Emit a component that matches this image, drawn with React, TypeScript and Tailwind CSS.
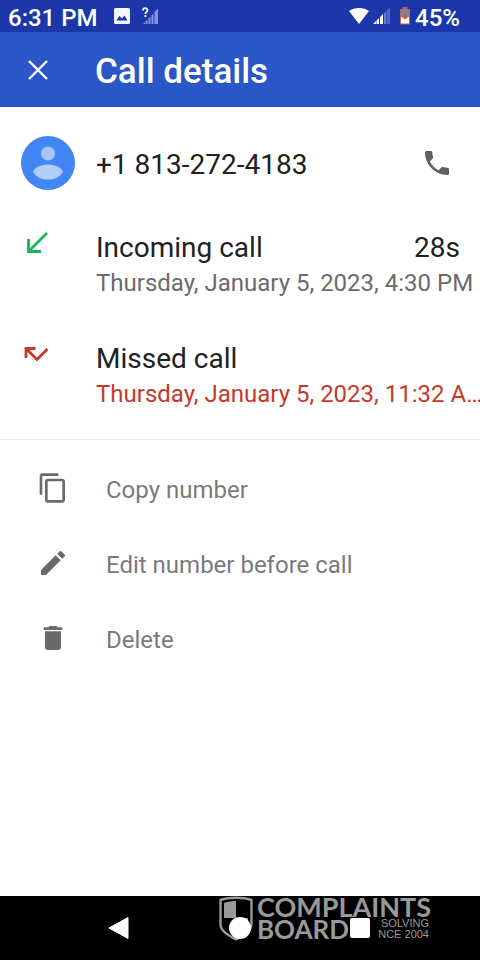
import { ReactNode } from "react"

const StatusBar = () => (
  <div className="flex h-8 items-center bg-[#1b37a9] pl-2 pr-5 text-2xl font-medium text-white">
    <span className="pt-1">6:31 PM</span>
    <svg className="ml-4 size-4" viewBox="0 0 16 16" aria-hidden="true">
      <path
        fill="#f4f7ff"
        fillRule="evenodd"
        d="M1.500 0h13A1.500 1.500 0 0 1 16 1.500v13a1.500 1.500 0 0 1-1.500 1.500h-13A1.500 1.500 0 0 1 0 14.500v-13A1.500 1.500 0 0 1 1.500 0zM2.500 12.500h11L10.500 7.500 8 10.500 5.300 8z"
      />
    </svg>
    <svg className="ml-3 h-[18px] w-4" viewBox="0 0 16 18" aria-hidden="true">
      <path
        fill="#8795d8"
        d="M1 17l2-2v2zM3.500 14.500l2-2V17h-2zM6.500 11.500l2-2V17h-2zM9.500 8.500l2-2V17h-2zM12.500 5L16 1.500V17h-3.500z"
      />
      <path
        fill="none"
        stroke="#f4f7ff"
        strokeWidth="1.800"
        d="M1 3.500C1 .5 5.500.5 5.500 3.200 5.500 5 3.400 4.800 3.400 7M3.400 8v2"
      />
    </svg>
    <svg className="ml-auto h-4 w-5" viewBox="0 0 20 16" aria-hidden="true">
      <path fill="#fff" d="M0 3C5.500-1 14.500-1 20 3L10 16z" />
    </svg>
    <svg className="ml-1 h-[18px] w-[18px]" viewBox="0 0 18 18" aria-hidden="true">
      <path fill="#fff" d="M0 17l3-3v3zM3.500 13.500l2.500-2.500v6H3.500zM7 10l3-3v10H7z" />
      <path fill="#6c7fd0" d="M11 6.500l2-2V17h-2z" />
      <path fill="#5363c6" d="M13.500 4L17 .5V17h-3.500z" />
    </svg>
    <svg className="ml-2 h-[18px] w-3" viewBox="0 0 12 18" aria-hidden="true">
      <path fill="#b0695f" d="M3.500 0h5v2H11v15.500H1V2h2.500z" />
      <path fill="#8d7da0" d="M2.500 3h7v7h-7z" />
      <path fill="#fff" d="M2 10h8v6.500H2z" />
      <path fill="#c9603f" d="M6 6.500l1 2.500 2.500 1L6 12.500 2.500 10 5 9z" />
    </svg>
    <span className="ml-1 pt-1">45%</span>
  </div>
)

const Header = () => (
  <header className="flex h-[75px] items-center border-b border-[#2450b5] bg-[#2a56c6] pl-[26px] pt-1.5 text-white">
    <button aria-label="Close">
      <svg className="size-6" viewBox="0 0 24 24" fill="none">
        <path stroke="currentColor" strokeWidth="2.400" d="M3 1l18 18M21 1L3 19" />
      </svg>
    </button>
    <h1 className="ml-[45px] text-[35px] font-medium leading-10">Call details</h1>
  </header>
)

const Contact = () => (
  <section className="flex items-center pl-[21px] pr-[27px]">
    <svg className="size-[54px] shrink-0" viewBox="0 0 54 54" aria-hidden="true">
      <circle cx="27" cy="27" r="27" fill="#4285f4" />
      <circle cx="27" cy="17.500" r="7" fill="#a6c5fa" />
      <path fill="#b3cdfb" d="M12 35.500C17 26 37 26 42 35.500 37 46.500 17 46.500 12 35.500z" />
    </svg>
    <h2 className="ml-[21px] flex-1 pt-1 text-[28px] leading-9">+1 813-272-4183</h2>
    <button aria-label="Call" className="text-[#616161]">
      <svg className="size-8" viewBox="0 0 24 24" fill="currentColor">
        <path d="M6.620 10.790c1.440 2.830 3.760 5.140 6.590 6.590l2.200-2.200c.27-.27.67-.36 1.020-.24 1.120.37 2.330.57 3.570.57.55 0 1 .45 1 1V20c0 .55-.45 1-1 1-9.390 0-17-7.610-17-17 0-.55.45-1 1-1h3.500c.55 0 1 .45 1 1 0 1.250.2 2.450.57 3.570.11.35.03.74-.25 1.020z" />
      </svg>
    </button>
  </section>
)

const CallEntry = ({
  icon,
  title,
  date,
  duration,
  missed,
}: {
  icon: ReactNode
  title: string
  date: string
  duration?: string
  missed?: boolean
}) => (
  <li className="flex pl-6">
    {icon}
    <div className="ml-12 min-w-0 flex-1">
      <div className="flex justify-between pr-5 text-[28px] leading-9">
        <span>{title}</span>
        {duration && <span>{duration}</span>}
      </div>
      <p
        className={`overflow-hidden whitespace-nowrap text-2xl leading-[34px] ${missed ? "text-[#c53929]" : "text-[#6b6b6b]"}`}
      >
        {date}
      </p>
    </div>
  </li>
)

const Action = ({ icon, label }: { icon: ReactNode; label: string }) => (
  <li>
    <button className="flex h-[75px] w-full items-center pl-[37px] text-left text-2xl text-[#7a7a7a]">
      <svg
        className="mb-1 mr-[37px] size-8 text-[#6a6a6a]"
        viewBox="0 0 24 24"
        fill="currentColor"
        aria-hidden="true"
      >
        {icon}
      </svg>
      {label}
    </button>
  </li>
)

const Watermark = () => (
  <div className="absolute right-[49px] top-0 flex gap-1 font-['Lato'] font-bold text-[#999]">
    <svg className="h-[45px] w-[34px]" viewBox="0 0 34 45" aria-hidden="true">
      <path
        fill="none"
        stroke="#999"
        strokeWidth="2.400"
        d="M1.500 4C10 1 24 1 32.500 4v24c0 7-7 11-15.500 15.500C8.500 39 1.500 35 1.500 28z"
      />
      <path fill="#999" d="M5 7c4-1.500 8-2 12-2v17H5zM17 22h12v7c0 5-6 8-12 11z" />
    </svg>
    <div>
      <div className="text-[27px] leading-[22px]">COMPLAINTS</div>
      <div className="flex items-center justify-between">
        <span className="text-[26px] leading-[22px]">BOARD</span>
        <span className="pr-0.5 text-right font-['Liberation_Sans'] text-[11px] font-normal leading-[11px]">
          SOLVING
          <br />
          NCE 2004
        </span>
      </div>
    </div>
  </div>
)

const NavBar = () => (
  <nav className="relative h-16 bg-black px-[12.5%]">
    <Watermark />
    <div className="relative grid h-full grid-cols-3 place-items-center text-white">
      <button aria-label="Back">
        <svg className="size-6" viewBox="0 0 24 24" fill="currentColor">
          <path d="M20 1.500v21L1 12z" stroke="currentColor" strokeLinejoin="round" />
        </svg>
      </button>
      <button aria-label="Home" className="size-[22px] rounded-full bg-white" />
      <button aria-label="Recent apps" className="size-5 rounded-xs bg-white" />
    </div>
  </nav>
)

export default function App() {
  return (
    <div className="flex min-h-screen flex-col bg-white font-['Roboto',sans-serif] text-[#212121]">
      <StatusBar />
      <Header />
      <main className="flex-1 pt-[29px]">
        <Contact />
        <ul className="mt-10 space-y-[41px] border-b border-[#e8e8e8] pb-7">
          <CallEntry
            icon={
              <svg className="size-6" viewBox="0 0 24 24" fill="none" aria-hidden="true">
                <path stroke="#18b65b" strokeWidth="2.800" d="M23 3L4.500 21.500M4.500 9v12.500H17" />
              </svg>
            }
            title="Incoming call"
            duration="28s"
            date="Thursday, January 5, 2023, 4:30 PM"
          />
          <CallEntry
            icon={
              <svg className="size-6" viewBox="0 0 24 24" fill="none" aria-hidden="true">
                <path stroke="#c53929" strokeWidth="2.800" d="M23.500 8L13 18.500 3 8.500M2 17V7.500h9.500" />
              </svg>
            }
            title="Missed call"
            date="Thursday, January 5, 2023, 11:32 A…"
            missed
          />
        </ul>
        <ul className="mt-3">
          <Action
            label="Copy number"
            icon={
              <path d="M16 1H4c-1.100 0-2 .9-2 2v14h2V3h12V1zm3 4H8c-1.100 0-2 .9-2 2v14c0 1.100.9 2 2 2h11c1.100 0 2-.9 2-2V7c0-1.100-.9-2-2-2zm0 16H8V7h11v14z" />
            }
          />
          <Action
            label="Edit number before call"
            icon={
              <path d="M3 17.250V21h3.750L17.810 9.940l-3.750-3.750L3 17.250zM20.710 7.040c.39-.39.39-1.020 0-1.410l-2.340-2.340c-.39-.39-1.020-.39-1.410 0l-1.830 1.830 3.750 3.750 1.830-1.830z" />
            }
          />
          <Action
            label="Delete"
            icon={
              <path d="M6 19c0 1.100.9 2 2 2h8c1.100 0 2-.9 2-2V7H6v12zM19 4h-3.500l-1-1h-5l-1 1H5v2h14V4z" />
            }
          />
        </ul>
      </main>
      <NavBar />
    </div>
  )
}
